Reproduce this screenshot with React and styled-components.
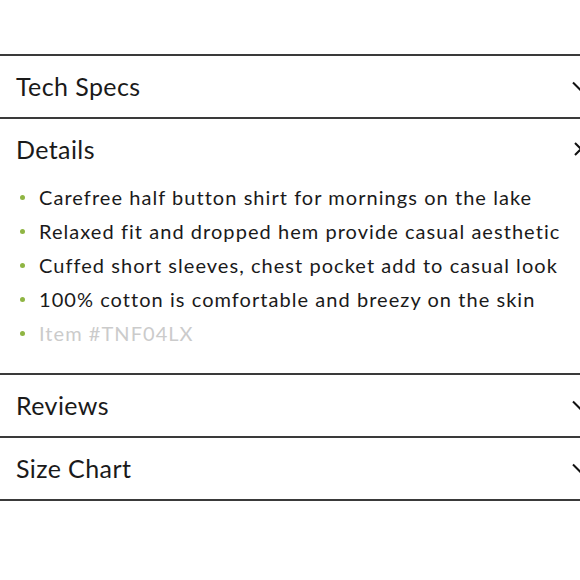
import React from "react";
import styled, { createGlobalStyle } from "styled-components";

const GlobalStyle = createGlobalStyle`
  body {
    margin: 0;
    background: #ffffff;
    overflow: hidden;
    font-family: Lato, "Noto Sans", "Liberation Sans", sans-serif;
    color: #1a1a1a;
  }
`;

const Page = styled.div`
  width: 594px;
  padding-top: 54px;
`;

const Section = styled.section`
  border-top: 2px solid #3a3a3a;
  &:last-child {
    border-bottom: 2px solid #3a3a3a;
  }
`;

const Header = styled.div`
  height: 61px;
  display: flex;
  align-items: center;
  justify-content: space-between;
  padding: 0 0 2px 16px;
  box-sizing: border-box;
  font-size: 25px;
  letter-spacing: 0.4px;
`;

const Icon = styled.svg`
  width: 16px;
  height: 16px;
  flex: none;
  margin-right: 6px;
`;

const List = styled.ul`
  list-style: none;
  margin: 0;
  padding: 0 0 23px 0;
`;

const Item = styled.li`
  display: flex;
  align-items: center;
  height: 34px;
  padding-left: 20px;
  font-size: 20px;
  letter-spacing: 1.05px;
  white-space: nowrap;
  color: ${(p) => (p.$muted ? "#cbcbcb" : "#1a1a1a")};

  &::before {
    content: "";
    width: 5px;
    height: 5px;
    border-radius: 50%;
    background: #8fb543;
    margin-right: 14px;
    flex: none;
  }
`;

const Chevron = () => (
  <Icon viewBox="0 0 16 16">
    <path d="M1 4.5 L8 11.5 L15 4.5" fill="none" stroke="#111" strokeWidth="2" />
  </Icon>
);

const Close = () => (
  <Icon viewBox="0 0 16 16">
    <path d="M3 1 L15 13 M15 1 L3 13" fill="none" stroke="#111" strokeWidth="2" transform="translate(0 1)" />
  </Icon>
);

const details = [
  "Carefree half button shirt for mornings on the lake",
  "Relaxed fit and dropped hem provide casual aesthetic",
  "Cuffed short sleeves, chest pocket add to casual look",
  "100% cotton is comfortable and breezy on the skin",
];

export default function App() {
  return (
    <>
      <GlobalStyle />
      <Page>
        <Section>
          <Header>
            Tech Specs
            <Chevron />
          </Header>
        </Section>
        <Section>
          <Header>
            Details
            <Close />
          </Header>
          <List>
            {details.map((d) => (
              <Item key={d}>{d}</Item>
            ))}
            <Item $muted>Item #TNF04LX</Item>
          </List>
        </Section>
        <Section>
          <Header>
            Reviews
            <Chevron />
          </Header>
        </Section>
        <Section>
          <Header>
            Size Chart
            <Chevron />
          </Header>
        </Section>
      </Page>
    </>
  );
}
